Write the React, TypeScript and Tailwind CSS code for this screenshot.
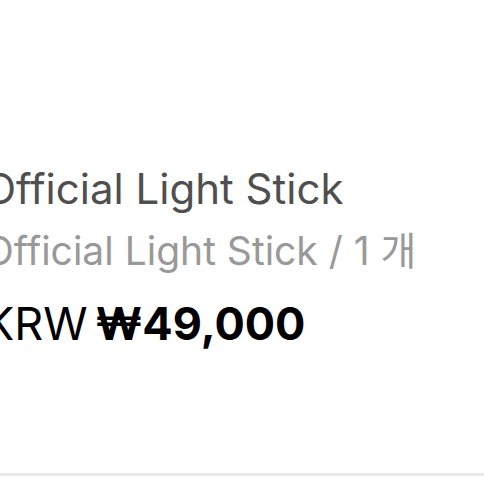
interface LineItem {
  name: string;
  option: string;
  currency: string;
  price: string;
}

const item: LineItem = {
  name: 'Official Light Stick',
  option: 'Official Light Stick / 1 개',
  currency: 'KRW',
  price: '₩49,000',
};

export default function App() {
  return (
    <main className="min-h-screen overflow-hidden bg-white font-['Inter','Noto_Sans_CJK_KR',sans-serif]">
      <article className="-ml-4 whitespace-nowrap border-b-3 border-[#e9e9e9] pt-[159px] pb-[108px]">
        <h1 className="text-[42px] leading-[60px] text-[#4f4f4f]">{item.name}</h1>
        <p className="text-[39px] leading-[64px] text-[#999999]">{item.option}</p>
        <p className="flex items-baseline gap-2 text-[45px] leading-[82px] text-black">
          <span>{item.currency}</span>
          <strong className="font-bold">{item.price}</strong>
        </p>
      </article>
    </main>
  );
}
